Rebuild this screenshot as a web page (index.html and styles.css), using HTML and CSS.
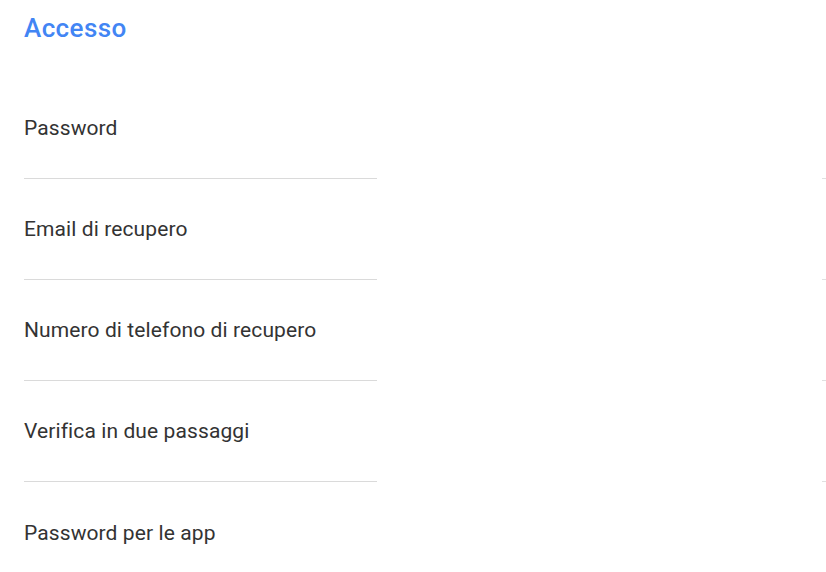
FILE: index.html
```html
<!DOCTYPE html>
<html lang="it">
<head>
    <meta charset="UTF-8">
    <meta name="viewport" content="width=device-width, initial-scale=1.0">
    <title>Accesso</title>
    <link rel="stylesheet" href="styles.css">
</head>
<body>

<section class="panel">
    <h2 class="panel-title">Accesso</h2>

    <div class="setting-row">
        <div class="setting-label">Password</div>
        <div class="setting-value"></div>
    </div>
    <div class="setting-row">
        <div class="setting-label">Email di recupero</div>
        <div class="setting-value"></div>
    </div>
    <div class="setting-row">
        <div class="setting-label">Numero di telefono di recupero</div>
        <div class="setting-value"></div>
    </div>
    <div class="setting-row">
        <div class="setting-label">Verifica in due passaggi</div>
        <div class="setting-value"></div>
    </div>
    <div class="setting-row last">
        <div class="setting-label">Password per le app</div>
        <div class="setting-value"></div>
    </div>
</section>

</body>
</html>
```

FILE: styles.css
```css
body {
    margin: 0;
    padding: 0;
    background: #fff;
    font-family: 'Roboto', 'Liberation Sans', sans-serif;
    color: #333;
    overflow: hidden;
}
.panel {
    padding: 12px 0 0 24px;
}
.panel-title {
    margin: 0 0 34px 0;
    font-size: 26px;
    font-weight: 500;
    line-height: 32px;
    letter-spacing: 0.4px;
    color: #4285f4;
}
.setting-row {
    display: flex;
    height: 101px;
}
.setting-label {
    width: 353px;
    flex-shrink: 0;
    display: flex;
    align-items: center;
    font-size: 21px;
    letter-spacing: 0.1px;
    color: #333;
    border-bottom: 1px solid #dadada;
    box-sizing: border-box;
}
.setting-value {
    margin-left: 445px;
    flex: 1;
    min-width: 0;
    border-bottom: 1px solid #e0e0e0;
    box-sizing: border-box;
}
.setting-row.last .setting-label,
.setting-row.last .setting-value {
    border-bottom: none;
}
```
